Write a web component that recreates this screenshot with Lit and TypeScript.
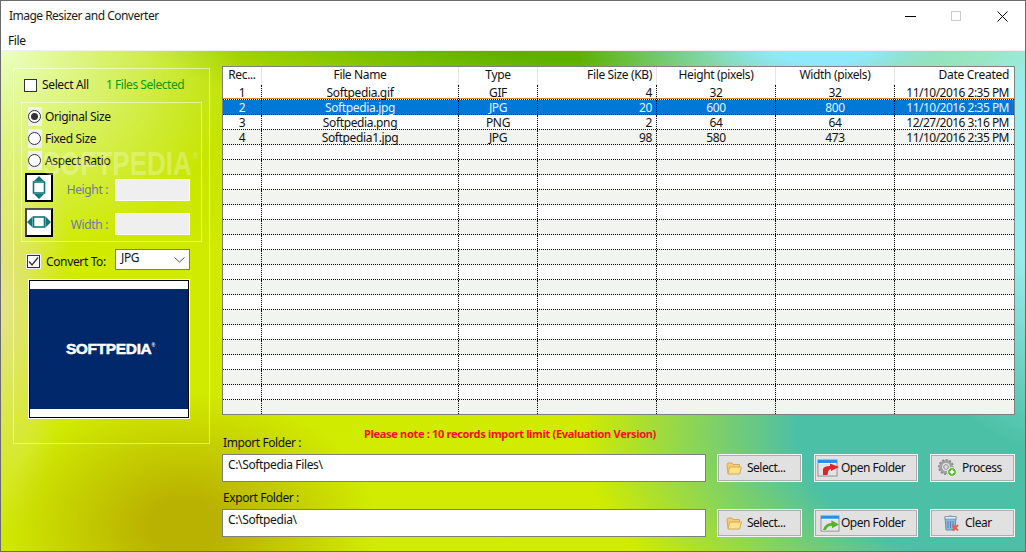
import { LitElement, html, css, svg } from "lit";
import { customElement } from "lit/decorators.js";

const DATA = [
  ["1", "Softpedia.gif", "GIF", "4", "32", "32", "11/10/2016 2:35 PM"],
  ["2", "Softpedia.jpg", "JPG", "20", "600", "800", "11/10/2016 2:35 PM"],
  ["3", "Softpedia.png", "PNG", "2", "64", "64", "12/27/2016 3:16 PM"],
  ["4", "Softpedia1.jpg", "JPG", "98", "580", "473", "11/10/2016 2:35 PM"],
];
const HEAD = ["Rec...", "File Name", "Type", "File Size (KB)", "Height (pixels)", "Width (pixels)", "Date Created"];
const ALIGN = ["c", "c", "c", "r", "c", "c", "r"];

const folder = html`<svg class="ico" width="16" height="13" viewBox="0 0 16 13">
  <path d="M1 2.5 L1.8 1 H6 L7 2.5 H13.5 V11.5 H2 Z" fill="#f6cd6c" stroke="#d2aa5a"/>
  <path d="M2 12 L3.6 5 H15.4 L13.6 12 Z" fill="#ffe18a" stroke="#d2aa5a"/>
</svg>`;

const win = (arrow: unknown) => svg`
  <rect x="1" y="1" width="19" height="16" fill="#f4f4f4" stroke="#8b8b8b"/>
  <rect x="1" y="1" width="19" height="3" fill="#2f8fe6"/>
  <rect x="2" y="5" width="17" height="11" fill="#e4e4e4"/>
  ${arrow}`;

const openRed = html`<svg class="ico" width="23" height="18" viewBox="0 0 23 18">
  ${win(svg`<path d="M6 16 V10 Q7 7 13 7 V4.5 L22 8 L14 12 V10 Q11 10 10.5 16 Z" fill="#e1222d"/>`)}
</svg>`;

const openGreen = html`<svg class="ico" width="20" height="17" viewBox="0 0 21 18">
  ${win(svg`<path d="M3 16 Q5 9 12 8.5 V5.5 L20 10 L12.5 14 V11.5 Q8 11.5 6 16 Z" fill="#58b02c"/>`)}
</svg>`;

const gears = html`<svg class="ico" width="19" height="18" viewBox="0 0 19 18">
  <circle cx="8" cy="8" r="5.4" fill="none" stroke="#a3a3a3" stroke-width="3"/>
  <circle cx="8" cy="8" r="7" fill="none" stroke="#8f8f8f" stroke-width="2" stroke-dasharray="2 1.6"/>
  <circle cx="8" cy="8" r="2.3" fill="#e1e1e1" stroke="#8f8f8f"/>
  <circle cx="14" cy="13" r="4.4" fill="#5cb531" stroke="#e8f4e0"/>
  <path d="M11.8 13 H16.2 M14 10.8 V15.2" stroke="#fff" stroke-width="1.6"/>
</svg>`;

const bin = html`<svg class="ico" width="15" height="16" viewBox="0 0 15 16">
  <path d="M1 2 Q6 0 12 2 L11 15 H2 Z" fill="#8fb9dc" stroke="#6f8ba6"/>
  <rect x="1" y="1.5" width="11" height="2.5" fill="#e8f0f6" stroke="#6f8ba6" stroke-width=".7"/>
  <path d="M4 6 V13 M6.5 6 V13 M9 6 V13" stroke="#4f83b5"/>
  <path d="M8.5 10 L14 15.5 M14 10 L8.5 15.5" stroke="#e8604c" stroke-width="2"/>
</svg>`;

const vert = html`<svg width="24" height="25" viewBox="0 0 24 25">
  <rect x="6.5" y="7" width="11" height="11" fill="#fff" stroke="#11767a" stroke-width="1.6"/>
  <path d="M12 1 L17 6 H7 Z M12 24 L17 19 H7 Z" fill="#11767a"/>
</svg>`;

const horiz = html`<svg width="24" height="25" viewBox="0 0 24 25">
  <rect x="6.5" y="7" width="11" height="10" fill="#fff" stroke="#11767a" stroke-width="1.6"/>
  <path d="M0 12 L5.5 6.5 V17.5 Z M24 12 L18.5 6.5 V17.5 Z" fill="#11767a"/>
</svg>`;

const tick = html`<svg width="11" height="11" viewBox="0 0 11 11">
  <path d="M1 5.5 L4 9 L10 1.5" fill="none" stroke="#333" stroke-width="1.3"/>
</svg>`;

@customElement("app-root")
export class AppRoot extends LitElement {
  static styles = css`
    :host {
      display: block;
      width: 1026px;
      height: 552px;
      box-sizing: border-box;
      border: 1px solid #6b6b6b;
      background: #fff;
      overflow: hidden;
      font: 12px/14px "Noto Sans", sans-serif;
      letter-spacing: -0.36px;
      color: #111;
    }
    .title {
      height: 30px;
      display: flex;
      align-items: center;
      padding-left: 8px;
      color: #1a1a1a;
    }
    .title span { letter-spacing: -0.52px; }
    .controls { margin-left: auto; display: flex; }
    .ctl { width: 45px; height: 30px; display: flex; align-items: center; justify-content: center; }
    .ctl + .ctl { margin-left: 1px; }
    .menu {
      height: 19px;
      padding-left: 7px;
      display: flex;
      align-items: center;
      border-bottom: 1px solid #f0f0f0;
    }
    main {
      position: relative;
      height: 500px;
      box-sizing: border-box;
      padding: 15px 0 0 12px;
      display: flex;
      gap: 12px;
      align-items: flex-start;
      background:
        radial-gradient(240px 210px at 0 0, #ecffc0, rgba(236,255,192,0) 100%),
        radial-gradient(250px 130px at 820px -20px, #90e8fc 25%, rgba(144,232,252,0) 100%),
        radial-gradient(170px 280px at 1050px 120px, #98ecec 35%, rgba(152,236,236,0) 100%),
        radial-gradient(480px 260px at 1060px 380px, #4cc0a6 55%, rgba(76,192,166,0) 100%),
        radial-gradient(480px 110px at 600px -30px, #5cb000 35%, rgba(92,176,0,0) 100%),
        radial-gradient(190px 135px at 185px 475px, #bab200 20%, rgba(186,178,0,0) 100%),
        radial-gradient(70px 240px at 0 250px, #e4e490, rgba(228,228,144,0) 100%),
        linear-gradient(#bde000, #d0ea00 40%, #d0ec00);
    }
    .wm {
      position: absolute;
      left: 42px;
      top: 99px;
      font: bold 26px/20px "Liberation Sans", sans-serif;
      letter-spacing: 0;
      white-space: nowrap;
      color: rgba(255,255,255,.3);
      transform: scaleY(1.3);
      transform-origin: 0 0;
      pointer-events: none;
    }
    .wm sup { font-size: 7px; vertical-align: top; line-height: 10px; margin-left: 1px; }

    .panel {
      width: 197px;
      height: 376px;
      margin-top: 2px;
      box-sizing: border-box;
      border: 1px solid rgba(255,255,255,.5);
      padding: 6px 0 0 7px;
    }
    .sel-all { display: flex; align-items: center; height: 20px; margin-left: 3px; }
    .cb {
      width: 13px; height: 13px; box-sizing: border-box;
      border: 1px solid #333; background: #fff;
      display: flex; align-items: center; justify-content: center;
      flex: none;
    }
    .sel-all .lab { width: 64px; margin-left: 5px; }
    .green { color: #0b9a14; letter-spacing: -0.46px; }
    .group {
      width: 181px;
      height: 140px;
      box-sizing: border-box;
      margin-top: 7px;
      border: 1px solid rgba(255,255,255,.5);
      padding-top: 4px;
    }
    .radio-row { height: 19px; margin: 0 0 3px 6px; display: flex; align-items: center; gap: 3px; }
    .radio-box { width: 14px; height: 19px; background: #f0f0f0; display: flex; align-items: center; flex: none; }
    .radio {
      width: 13px; height: 13px; box-sizing: border-box;
      border: 1px solid #333; border-radius: 50%; background: #fff;
      display: flex; align-items: center; justify-content: center;
    }
    .radio.on::after { content: ""; width: 7px; height: 7px; border-radius: 50%; background: #333; }
    .size-row { display: flex; margin: 0 0 6px 3px; }
    .size-btn {
      width: 28px; height: 29px; box-sizing: border-box;
      border: 2px solid #000; background: #fff;
      display: flex; align-items: center; justify-content: center;
      flex: none;
    }
    .size-row.w .size-btn { border-top-color: #555; border-left-color: #444; }
    .size-lab { width: 55px; text-align: right; color: #6e7aa0; align-self: center; padding-top: 4px; }
    .size-input {
      width: 75px; height: 22px; box-sizing: border-box; margin-left: 7px;
      border: 1px solid #fafafa; background: #efefef;
      align-self: flex-end; margin-bottom: 1px;
    }
    .size-row.w .size-input { margin-bottom: 2px; }
    .convert { display: flex; margin: 7px 0 0 6px; height: 21px; align-items: flex-end; }
    .convert .cb { margin-bottom: 2px; outline: 1px solid #f2f2f2; }
    .convert .lab { width: 69px; margin-left: 6px; margin-bottom: 1px; }
    .select {
      width: 75px; height: 21px; box-sizing: border-box;
      border: 1px solid #7a7a7a; background: #fff;
      display: flex; align-items: center; justify-content: space-between;
      padding: 0 4px 3px 5px;
    }
    .select svg { margin-top: 3px; }
    .preview {
      width: 162px; height: 140px; box-sizing: border-box;
      margin: 9px 0 0 7px;
      border: 1px solid #fff;
      background: #000;
      padding: 1px;
    }
    .preview-in {
      height: 100%; box-sizing: border-box; background: #fff; padding: 8px 0;
    }
    .navy {
      height: 100%; background: #02286c; display: flex; align-items: center; justify-content: center;
      color: #fff; font: bold 15.5px/16px "Liberation Sans", sans-serif; letter-spacing: -0.35px;
      -webkit-text-stroke: 0.5px #fff;
      padding-left: 3px;
    }
    .navy sup { font-size: 5px; line-height: 8px; align-self: flex-start; margin-top: 52px; -webkit-text-stroke: 0; letter-spacing: 0; }

    .right { width: 793px; }
    .table {
      width: 793px; height: 349px; box-sizing: border-box;
      border: 1px solid #808080;
      background: #fff;
      overflow: hidden;
    }
    .row { display: grid; grid-template-columns: 39px 197px 79px 119px 119px 119px 119px; height: 15px; box-sizing: border-box; border-bottom: 1px dotted #000; }
    .row.head { height: 18px; border: 0; }
    .cell { line-height: 16px; height: 14px; padding: 0 4px; box-sizing: border-box; white-space: nowrap; border-right: 1px dotted #000; }
    .cell:last-child { border-right-color: transparent; letter-spacing: -0.52px; }
    .head .cell { border-right: 1px solid #e5e5e5; line-height: 16px; height: 18px; }
    .head .cell:last-child { border-right-color: transparent; letter-spacing: -0.3px; }
    .c { text-align: center; }
    .r { text-align: right; }
    .row.alt { background: #f2f4f0; }
    .row.sel { background: #0078d7; color: #e8f0f8; }
    .row.pre { background: linear-gradient(to top, #e08a2a 1px, #fff 1px); }

    .stack { display: grid; height: 23px; margin-top: 12px; }
    .stack > * { grid-area: 1 / 1; }
    .note {
      margin-left: 142px;
      font: bold 11px/14px "Noto Sans", sans-serif;
      letter-spacing: -0.31px;
      color: #fa0d28;
    }
    .flabel { align-self: end; margin-left: 1px; letter-spacing: -0.42px; }
    .flabel.exp { margin-top: 9px; height: 14px; }
    .frow { display: flex; height: 28px; margin-top: 4px; }
    .path {
      width: 484px; box-sizing: border-box;
      border: 1px solid #7f7f7f; background: #fff;
      padding: 3px 5px;
      margin-right: 11px;
    }
    .btn {
      height: 28px; box-sizing: border-box;
      border: 1px solid #f4f4f4;
      box-shadow: inset 0 0 0 1px #adadad;
      background: #e1e1e1;
      display: flex; align-items: center;
      flex: none;
      letter-spacing: -0.5px;
    }
    .btn + .btn { margin-left: 12px; }
    .b-sel { width: 85px; padding-left: 8px; gap: 5px; }
    .b-open { width: 104px; padding-left: 2px; gap: 1px; }
    .b-open2 { padding-left: 5px; gap: 1px; }
    .b-proc { width: 85px; padding-left: 7px; gap: 5px; }
    .b-clr { width: 85px; padding-left: 13px; gap: 6px; }
    .ico { flex: none; }
  `;

  private renderRow(i: number) {
    const d = DATA[i];
    const cls = ["row"];
    if (i === 1) cls.push("sel");
    else if (i === 0) cls.push("pre");
    else if (i % 2 === 1) cls.push("alt");
    return html`<div class=${cls.join(" ")}>
      ${ALIGN.map((a, c) => html`<div class="cell ${a}">${d ? d[c] : ""}</div>`)}
    </div>`;
  }

  render() {
    return html`
      <div class="title">
        <span>Image Resizer and Converter</span>
        <div class="controls">
          <div class="ctl"><svg width="11" height="11"><path d="M0 5.5H11" stroke="#000"/></svg></div>
          <div class="ctl"><svg width="11" height="11"><rect x=".5" y=".5" width="9" height="9" fill="none" stroke="#ccc"/></svg></div>
          <div class="ctl"><svg width="11" height="11"><path d="M.5 .5L10.5 10.5M10.5 .5L.5 10.5" stroke="#000"/></svg></div>
        </div>
      </div>
      <div class="menu">File</div>
      <main>
        <div class="panel">
          <div class="sel-all">
            <span class="cb"></span><span class="lab">Select All</span>
            <span class="green">1 Files Selected</span>
          </div>
          <div class="group">
            <div class="radio-row"><span class="radio-box"><span class="radio on"></span></span>Original Size</div>
            <div class="radio-row"><span class="radio-box"><span class="radio"></span></span>Fixed Size</div>
            <div class="radio-row"><span class="radio-box"><span class="radio"></span></span>Aspect Ratio</div>
            <div class="size-row">
              <div class="size-btn">${vert}</div>
              <div class="size-lab">Height :</div>
              <div class="size-input"></div>
            </div>
            <div class="size-row w">
              <div class="size-btn">${horiz}</div>
              <div class="size-lab">Width :</div>
              <div class="size-input"></div>
            </div>
          </div>
          <div class="convert">
            <span class="cb">${tick}</span><span class="lab">Convert To:</span>
            <div class="select">JPG
              <svg width="11" height="6"><path d="M.5 .5L5.5 5L10.5 .5" fill="none" stroke="#555"/></svg>
            </div>
          </div>
          <div class="preview"><div class="preview-in"><div class="navy">SOFTPEDIA<sup>®</sup></div></div></div>
        </div>
        <div class="right">
          <div class="table">
            <div class="row head">
              ${HEAD.map((h, c) => html`<div class="cell ${ALIGN[c]}">${h}</div>`)}
            </div>
            ${Array.from({ length: 22 }, (_, i) => this.renderRow(i))}
          </div>
          <div class="stack">
            <div class="note">Please note : 10 records import limit (Evaluation Version)</div>
            <div class="flabel">Import Folder :</div>
          </div>
          <div class="frow">
            <div class="path">C:\\Softpedia Files\\</div>
            <div class="btn b-sel">${folder}Select...</div>
            <div class="btn b-open">${openRed}Open Folder</div>
            <div class="btn b-proc">${gears}Process</div>
          </div>
          <div class="flabel exp">Export Folder :</div>
          <div class="frow">
            <div class="path">C:\\Softpedia\\</div>
            <div class="btn b-sel">${folder}Select...</div>
            <div class="btn b-open b-open2">${openGreen}Open Folder</div>
            <div class="btn b-clr">${bin}Clear</div>
          </div>
        </div>
        <div class="wm">SOFTPEDIA<sup>®</sup></div>
      </main>
    `;
  }
}
